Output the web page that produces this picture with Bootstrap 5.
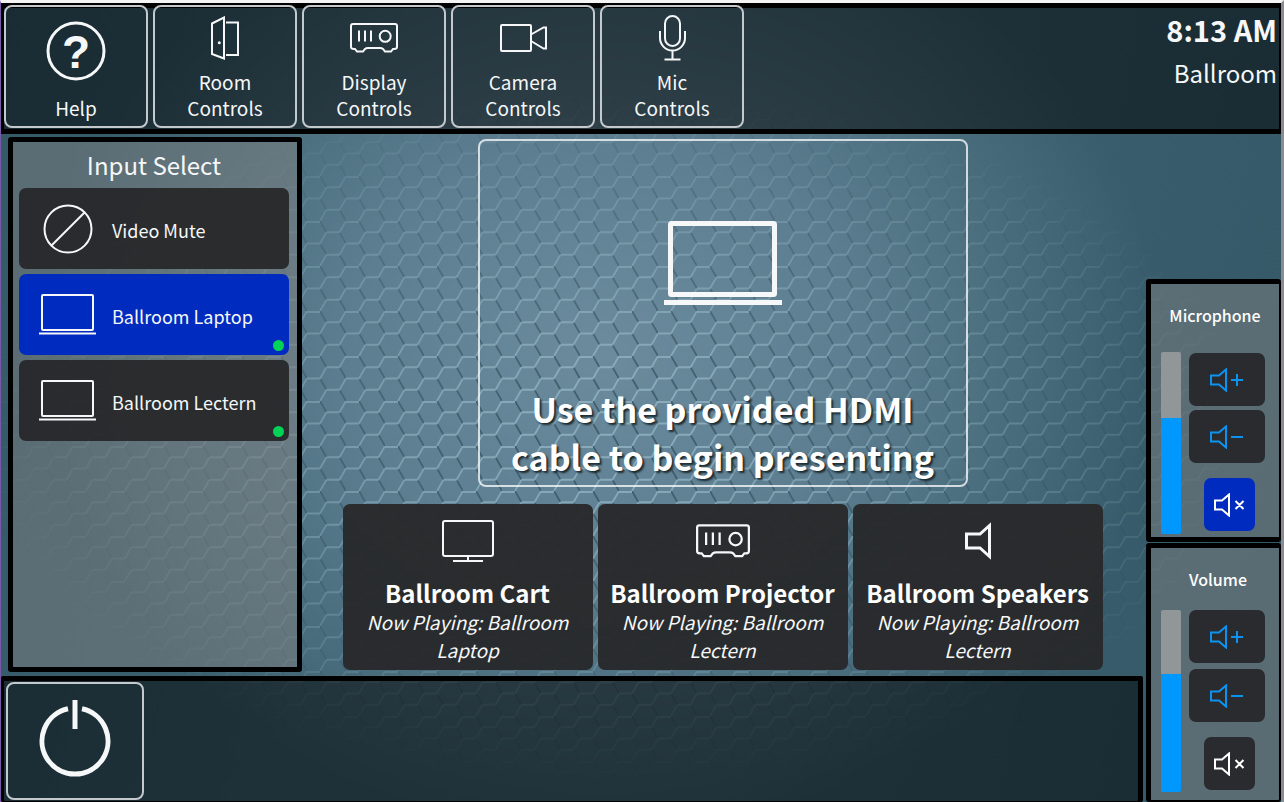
<!DOCTYPE html>
<html lang="en">
<head>
<meta charset="utf-8">
<meta name="viewport" content="width=device-width, initial-scale=1">
<title>Ballroom Control</title>
<link href="https://cdn.jsdelivr.net/npm/bootstrap@5.3.0/dist/css/bootstrap.min.css" rel="stylesheet">
<style>
  body {
    font-family: "Noto Sans CJK SC", "Noto Sans", sans-serif;
    color: #f5f7f8;
    background: #365a68;
    border-top: 3px solid #f4f4f4;
    border-right: 3px solid #8d8b92;
    border-left: 1px solid #7a58a8;
  }
  .screen {
    position: relative;
    isolation: isolate;
    min-height: calc(100vh - 3px);
    background:
      radial-gradient(ellipse 560px 480px at 47% 44%, #6c8c9e 0, #5c7e90 45%, #365a6800 100%),
      linear-gradient(100deg, #345967 0, #3d6171 30%, #3d6171 60%, #345866 100%);
  }
  /* honeycomb texture, strongest around the middle of the screen */
  .screen::before {
    content: "";
    position: absolute;
    inset: 0;
    z-index: -1;
    background: url("data:image/svg+xml,%3Csvg xmlns='http://www.w3.org/2000/svg' width='39' height='45' fill='none' stroke-width='1.8'%3E%3Cg id='a'%3E%3Cpath stroke='%232c4856' stroke-opacity='.65' d='M13 0l6.5 11.25M32.5 11.25L39 22.5M13 22.5l6.5 11.25M32.5 33.75L39 45'/%3E%3Cpath stroke='%23a5c8d6' stroke-opacity='.55' d='M0 1h13M19.5 11.25h13L39 0M19.5 11.25L13 22.5H0M19.5 33.75h13L39 22.5M19.5 33.75L13 45'/%3E%3C/g%3E%3C/svg%3E") 33px 38px;
    -webkit-mask-image: radial-gradient(ellipse 640px 350px at 48% 54%, #000 15%, rgba(0,0,0,.5) 60%, rgba(0,0,0,.25) 85%, transparent 100%);
    mask-image: radial-gradient(ellipse 640px 350px at 48% 54%, #000 15%, rgba(0,0,0,.5) 60%, rgba(0,0,0,.25) 85%, transparent 100%);
  }
  svg { fill: none; stroke: currentColor; stroke-width: 2; display: block; }
  button { font: inherit; color: inherit; }

  .topbar {
    background: rgba(0, 0, 0, .5);
    box-shadow: inset 0 5px #000, inset 0 -5px #000, inset 3px 0 #000, inset -2px 0 #000;
    padding: 2px 4px 6px 3px;
  }
  .tile {
    background: transparent;
    border: 2px solid #c3c9cc;
    border-radius: 8px;
    width: 144px;
    height: 123px;
    padding: 0 30px;
    font-size: 19px;
    line-height: 26px;
  }
  .tile .pic { height: 62px; }
  .tile .pic-tall { height: 88px; }
  .qmark { font: bold 46px "Liberation Sans", sans-serif; fill: currentColor; stroke: none; }
  .clock { font-size: 29px; font-weight: 700; line-height: 44px; margin-top: 2px; }
  .room { font-size: 24px; line-height: 44px; }

  .pane { background: rgba(128, 128, 128, .5); border: 5px solid #000; border-radius: 3px; }
  .inputs { width: 294px; margin: 3px 0 4px 7px; padding: 0 8px 0 6px; }
  .inputs h2 { font-size: 24px; font-weight: 400; line-height: 46px; }
  .dark { background: rgba(40, 41, 43, .97); border: 0; border-radius: 7px; }
  .chosen { background: #002bbf; }
  .source { height: 81px; padding-left: 19px; gap: 15px; font-size: 18px; }
  .source .slot { width: 59px; }
  .lamp { position: absolute; right: 5px; bottom: 4px; width: 11px; height: 11px; border-radius: 50%; background: #00d355; }

  .stage { padding: 5px 0 6px; gap: 17px; }
  .hint { width: 490px; border: 2px solid rgba(255, 255, 255, .75); border-radius: 8px; }
  .hint p { font-size: 34px; font-weight: 700; line-height: 48px; color: #fff; text-shadow: 2px 2px 2px #1c2a30; margin-bottom: 4px; }
  .output { width: 250px; padding: 16px 15px 6px; font-size: 19px; line-height: 28px; }
  .output .pic { height: 42px; margin-bottom: 16px; }
  .output h3 { font-size: 24px; font-weight: 700; line-height: 30px; color: #fff; margin: 0 -12px; }

  .bottombar {
    background: rgba(0, 0, 0, .5);
    box-shadow: inset 0 5px #000, inset -5px 0 #000, inset 3px 0 #000, inset 0 -1px #000;
    border-radius: 3px;
    padding: 6px 5px 2px;
  }
  .power { width: 138px; height: 118px; }
  .heavy { stroke-width: 5; }
  .medium-line { stroke-width: 3; }

  .levels { width: 135px; gap: 1px; margin-left: 3px; }
  .level { border-right-width: 2px; padding: 0 14px 3px 10px; }
  .level h2 { font-size: 16px; font-weight: 500; line-height: 24px; color: #fff; margin: 19px -14px 25px -10px; }
  .level-main.level { padding-bottom: 8px; border-bottom-width: 2px; }
  .level-main.level h2 { margin: 19px -14px 19px -4px; }
  .fader {
    -webkit-appearance: none;
    appearance: none;
    writing-mode: vertical-lr;
    direction: rtl;
    width: 20px;
    height: 182px;
    margin: 0;
    border-radius: 2px;
    background: linear-gradient(to top, #0098ff var(--level), #919699 var(--level));
  }
  .fader::-webkit-slider-thumb { -webkit-appearance: none; width: 20px; height: 1px; opacity: 0; }
  .keys { width: 76px; gap: 4px; padding: 1px 0 3px; }
  .level-main .keys { gap: 6px; padding: 0 0 2px; }
  .key { width: 76px; height: 53px; color: #0c93f2; }
  .mute { width: 51px; color: #fff; margin: auto 10px 0 auto; }
</style>
</head>
<body>
<div class="screen d-flex flex-column">
  <header class="topbar d-flex justify-content-between">
    <nav class="d-flex" style="gap:5px" aria-label="Room">
      <button class="tile d-flex flex-column align-items-center">
        <span class="pic-tall d-flex align-items-center"><svg width="60" height="60"><circle cx="30" cy="30" r="28" class="medium-line"/><text class="qmark" x="30" y="47" text-anchor="middle">?</text></svg></span>
        <span>Help</span>
      </button>
      <button class="tile d-flex flex-column align-items-center">
        <span class="pic d-flex align-items-center"><svg width="28" height="44"><path d="M1 7.500L13 1.500V42.500L1 38zM15 6.500H27V39H15"/><circle cx="8.300" cy="26.700" r="1.500" fill="currentColor" stroke="none"/></svg></span>
        <span>Room Controls</span>
      </button>
      <button class="tile d-flex flex-column align-items-center">
        <span class="pic d-flex align-items-center"><svg width="48" height="30" viewBox="0 0 48 30"><path id="projector" d="M3 1H45Q47 1 47 3V24Q47 26 44 26H43L41 28.500H35L33 26Q32 25 30 25H18Q16 25 15 26L13 28.500H7L5 26H4Q1 26 1 24V3Q1 1 3 1ZM9 7.500v11M15 7.500v11M21 7.500v11M29.700 13.300a5.500 5.500 0 1 0 11 0a5.500 5.500 0 1 0-11 0"/></svg></span>
        <span>Display Controls</span>
      </button>
      <button class="tile d-flex flex-column align-items-center">
        <span class="pic d-flex align-items-center"><svg width="47" height="28"><rect x="1" y="1" width="30" height="26" rx="1"/><path d="M31 10.500L43.500 3.500H46V24.500H43.500L31 17"/></svg></span>
        <span>Camera Controls</span>
      </button>
      <button class="tile d-flex flex-column align-items-center">
        <span class="pic d-flex align-items-center"><svg width="27" height="46"><rect x="6" y="1" width="15" height="30" rx="7.500"/><path d="M1 16v7a12.500 12.500 0 0 0 25 0v-7M13.500 35.500v9M5.500 44.500h16"/></svg></span>
        <span>Mic Controls</span>
      </button>
    </nav>
    <div class="text-end">
      <div class="clock">8:13 AM</div>
      <div class="room">Ballroom</div>
    </div>
  </header>

  <div class="d-flex flex-grow-1">
    <div class="d-flex flex-column flex-grow-1">
      <main class="d-flex flex-grow-1">
        <section class="pane inputs">
          <h2 class="text-center mb-0">Input Select</h2>
          <div class="d-grid" style="gap:5px">
            <button class="source dark d-flex align-items-center">
              <span class="slot d-flex justify-content-center"><svg width="50" height="50"><circle cx="25" cy="25" r="23.500"/><path d="M8 42L42 8"/></svg></span>
              <span class="pt-1">Video Mute</span>
            </button>
            <button class="source dark chosen position-relative d-flex align-items-center">
              <span class="slot d-flex justify-content-center"><svg width="57" height="41"><rect x="3" y="1" width="51" height="35" rx="1"/><path d="M0 39.500h57"/></svg></span>
              <span class="pt-1">Ballroom Laptop</span><i class="lamp"></i>
            </button>
            <button class="source dark position-relative d-flex align-items-center">
              <span class="slot d-flex justify-content-center"><svg width="57" height="41"><rect x="3" y="1" width="51" height="35" rx="1"/><path d="M0 39.500h57"/></svg></span>
              <span class="pt-1">Ballroom Lectern</span><i class="lamp"></i>
            </button>
          </div>
        </section>

        <section class="stage d-flex flex-column flex-grow-1 align-items-center">
          <div class="hint flex-grow-1 d-flex flex-column align-items-center text-center">
            <div class="flex-grow-1 d-flex align-items-center"><svg class="heavy" width="118" height="84"><rect x="6.500" y="2.500" width="104" height="71" rx="1"/><path d="M0 81.500h118"/></svg></div>
            <p>Use the provided HDMI<br>cable to begin presenting</p>
          </div>
          <div class="d-flex text-center" style="gap:5px">
            <button class="output dark">
              <span class="pic d-flex justify-content-center align-items-center"><svg width="52" height="42"><rect x="1" y="1" width="50" height="35" rx="2"/><path d="M26 36v5M11 41h30"/></svg></span>
              <h3>Ballroom Cart</h3>
              <em>Now Playing: Ballroom Laptop</em>
            </button>
            <button class="output dark">
              <span class="pic d-flex justify-content-center align-items-center"><svg width="54" height="34" viewBox="0 0 48 30"><use href="#projector"/></svg></span>
              <h3>Ballroom Projector</h3>
              <em>Now Playing: Ballroom Lectern</em>
            </button>
            <button class="output dark">
              <span class="pic d-flex justify-content-center align-items-center"><svg class="medium-line" width="26" height="38"><path d="M1.500 12H15L24.500 3.500V34.500L15 26H1.500Z"/></svg></span>
              <h3>Ballroom Speakers</h3>
              <em>Now Playing: Ballroom Lectern</em>
            </button>
          </div>
        </section>
      </main>
      <footer class="bottombar">
        <button class="tile power d-flex align-items-center justify-content-center" aria-label="Power"><svg class="heavy mb-1" width="72" height="78"><path d="M29 8.800A33 33 0 1 0 43 8.800M36 0V29"/></svg></button>
      </footer>
    </div>

    <aside class="levels d-flex flex-column justify-content-end">
      <section class="pane level">
        <h2 class="text-center">Microphone</h2>
        <div class="d-flex justify-content-between">
          <input class="fader" type="range" value="64" aria-label="Microphone level" style="--level:64%">
          <div class="keys d-flex flex-column">
            <button class="key dark d-flex align-items-center justify-content-center" aria-label="Microphone up"><svg width="34" height="24"><path d="M1 7.500h8l7-6v21l-7-6H1zM21 12h12M27 6v12"/></svg></button>
            <button class="key dark d-flex align-items-center justify-content-center" aria-label="Microphone down"><svg width="34" height="24"><path d="M1 7.500h8l7-6v21l-7-6H1zM21 12h12"/></svg></button>
            <button class="key mute dark chosen d-flex align-items-center justify-content-center p-0" aria-label="Mute microphone"><svg width="32" height="24"><path d="M1 7.500h7l7-6v21l-7-6H1zM21.500 8l8 8M29.500 8l-8 8"/></svg></button>
          </div>
        </div>
      </section>
      <section class="pane level level-main">
        <h2 class="text-center">Volume</h2>
        <div class="d-flex justify-content-between">
          <input class="fader" type="range" value="65" aria-label="Volume level" style="--level:65%">
          <div class="keys d-flex flex-column">
            <button class="key dark d-flex align-items-center justify-content-center" aria-label="Volume up"><svg width="34" height="24"><path d="M1 7.500h8l7-6v21l-7-6H1zM21 12h12M27 6v12"/></svg></button>
            <button class="key dark d-flex align-items-center justify-content-center" aria-label="Volume down"><svg width="34" height="24"><path d="M1 7.500h8l7-6v21l-7-6H1zM21 12h12"/></svg></button>
            <button class="key mute dark d-flex align-items-center justify-content-center p-0" aria-label="Mute volume"><svg width="32" height="24"><path d="M1 7.500h7l7-6v21l-7-6H1zM21.500 8l8 8M29.500 8l-8 8"/></svg></button>
          </div>
        </div>
      </section>
    </aside>
  </div>
</div>
<script src="https://cdn.jsdelivr.net/npm/bootstrap@5.3.0/dist/js/bootstrap.bundle.min.js"></script>
</body>
</html>
